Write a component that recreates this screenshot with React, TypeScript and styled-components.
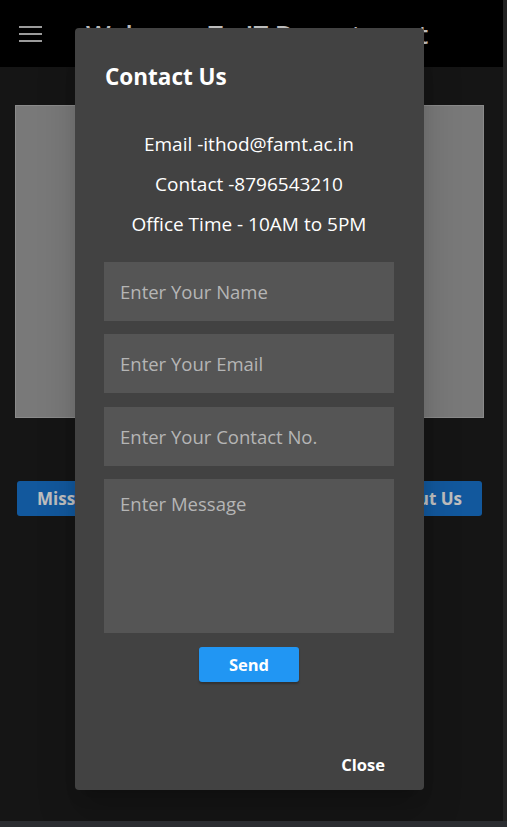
import React from 'react';
import styled, { createGlobalStyle } from 'styled-components';

const GlobalStyle = createGlobalStyle`
  html, body {
    margin: 0;
    padding: 0;
    height: 100%;
    background: #2b2d31;
    font-family: "Open Sans", "Noto Sans", sans-serif;
  }
  #root {
    height: 100%;
  }
  * {
    box-sizing: border-box;
  }
`;

const Shell = styled.div`
  height: 100%;
  display: grid;
  grid-template-columns: 1fr 4px;
  grid-template-rows: 1fr 6px;
`;

const Page = styled.div`
  position: relative;
  background: #1c1c1c;
  overflow: hidden;
  display: flex;
  flex-direction: column;
`;

const ScrollStrip = styled.div`
  background: #222222;
`;

const BottomStrip = styled.div`
  grid-column: 1 / span 2;
  background: #2b2d31;
`;

const TopBar = styled.header`
  height: 67px;
  background: #000;
  display: flex;
  align-items: center;
  padding-left: 19px;
  gap: 44px;
`;

const Burger = styled.div`
  width: 23px;
  display: flex;
  flex-direction: column;
  gap: 5px;
  span {
    height: 2px;
    background: #cfcfcf;
  }
`;

const Title = styled.h1`
  margin: 0;
  font-size: 26px;
  font-weight: 600;
  color: #fff;
  white-space: nowrap;
`;

const Content = styled.main`
  padding: 38px 19px 0 15px;
  display: flex;
  flex-direction: column;
`;

const Banner = styled.div`
  height: 313px;
  background: #a2a2a2;
  border: 1px solid #b8b8b8;
`;

const ButtonRow = styled.div`
  margin-top: 63px;
  padding: 0 2px;
  display: flex;
  justify-content: space-between;
`;

const NavButton = styled.button`
  height: 35px;
  padding: 0 20px;
  border: none;
  border-radius: 3px;
  background: #1976d2;
  color: #fff;
  font-family: inherit;
  font-size: 17px;
  font-weight: 700;
`;

const Backdrop = styled.div`
  position: absolute;
  inset: 0;
  background: rgba(0, 0, 0, 0.25);
  display: flex;
  align-items: center;
  justify-content: center;
  padding: 0 4px 4px 0;
`;

const Dialog = styled.div`
  width: 349px;
  height: 762px;
  background: #424242;
  border-radius: 4px;
  box-shadow: 0 11px 15px -7px rgba(0, 0, 0, 0.2), 0 24px 38px 3px rgba(0, 0, 0, 0.14);
  display: flex;
  flex-direction: column;
  color: #fff;
`;

const DialogTitle = styled.h2`
  margin: 0;
  padding: 33px 30px 0;
  font-size: 22.5px;
  font-weight: 700;
  line-height: 32px;
`;

const DialogBody = styled.div`
  padding: 0 30px 0 29px;
  display: flex;
  flex-direction: column;
`;

const Info = styled.div`
  margin-top: 38px;
  display: flex;
  flex-direction: column;
  align-items: center;
  gap: 14px;
  font-size: 19px;
  line-height: 26px;
`;

const Form = styled.form`
  margin-top: 25px;
  display: flex;
  flex-direction: column;
  gap: 13.5px;
`;

const Field = styled.input`
  height: 59px;
  border: none;
  background: #555555;
  padding: 0 16px;
  font-family: inherit;
  font-size: 18.5px;
  color: #fff;
  &::placeholder {
    color: #b5b5b5;
  }
`;

const MessageField = styled.textarea`
  height: 154px;
  border: none;
  resize: none;
  background: #555555;
  padding: 12px 16px;
  font-family: inherit;
  font-size: 18.5px;
  color: #fff;
  &::placeholder {
    color: #b5b5b5;
  }
`;

const SendButton = styled.button`
  align-self: center;
  margin-top: 0.5px;
  width: 100px;
  height: 35px;
  border: none;
  border-radius: 3px;
  background: #2196f3;
  color: #fff;
  font-family: inherit;
  font-size: 16.5px;
  font-weight: 700;
  box-shadow: 0 2px 2px rgba(0, 0, 0, 0.25);
`;

const Actions = styled.div`
  margin-top: auto;
  padding: 0 31px 8px;
  display: flex;
  justify-content: flex-end;
`;

const CloseButton = styled.button`
  border: none;
  background: transparent;
  color: #fff;
  padding: 6px 8px;
  font-family: inherit;
  font-size: 16.5px;
  font-weight: 700;
`;

export default function App() {
  return (
    <>
      <GlobalStyle />
      <Shell>
        <Page>
          <TopBar>
            <Burger>
              <span />
              <span />
              <span />
            </Burger>
            <Title>Welcome To IT Department</Title>
          </TopBar>
          <Content>
            <Banner />
            <ButtonRow>
              <NavButton>Mission</NavButton>
              <NavButton>About Us</NavButton>
            </ButtonRow>
          </Content>
          <Backdrop>
            <Dialog>
              <DialogTitle>Contact Us</DialogTitle>
              <DialogBody>
                <Info>
                  <span>Email -ithod@famt.ac.in</span>
                  <span>Contact -8796543210</span>
                  <span>Office Time - 10AM to 5PM</span>
                </Info>
                <Form onSubmit={e => e.preventDefault()}>
                  <Field placeholder="Enter Your Name" />
                  <Field placeholder="Enter Your Email" />
                  <Field placeholder="Enter Your Contact No." />
                  <MessageField placeholder="Enter Message" />
                  <SendButton type="submit">Send</SendButton>
                </Form>
              </DialogBody>
              <Actions>
                <CloseButton>Close</CloseButton>
              </Actions>
            </Dialog>
          </Backdrop>
        </Page>
        <ScrollStrip />
        <BottomStrip />
      </Shell>
    </>
  );
}
